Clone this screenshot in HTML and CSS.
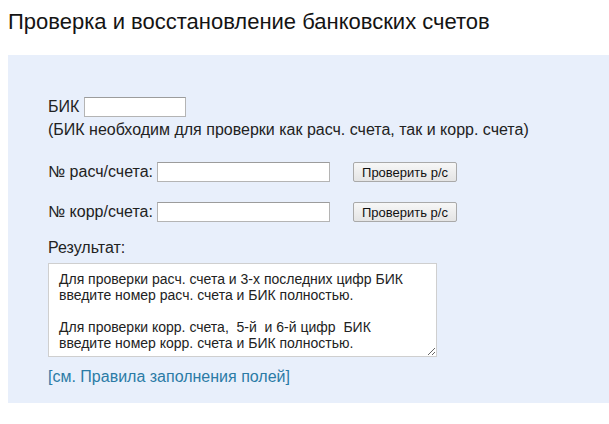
FILE: index.html
```html
<!DOCTYPE html>
<html lang="ru">
<head>
<meta charset="utf-8">
<title>Проверка и восстановление банковских счетов</title>
<link rel="stylesheet" href="styles.css">
</head>
<body>
<div class="page">
  <h1 class="title">Проверка и восстановление банковских счетов</h1>
  <div class="panel">
    <div class="row row-bik">
      <span class="label">БИК</span>
      <input class="field field-bik" type="text">
    </div>
    <div class="hint">(БИК необходим для проверки как расч. счета, так и корр. счета)</div>
    <div class="row row-acc">
      <span class="label">№ расч/счета:</span>
      <input class="field field-acc" type="text">
      <button class="btn" type="button">Проверить р/с</button>
    </div>
    <div class="row row-acc row-corr">
      <span class="label">№ корр/счета:</span>
      <input class="field field-acc" type="text">
      <button class="btn" type="button">Проверить р/с</button>
    </div>
    <div class="result-label">Результат:</div>
    <textarea class="result">Для проверки расч. счета и 3-х последних цифр БИК
введите номер расч. счета и БИК полностью.

Для проверки корр. счета,  5-й  и 6-й цифр  БИК
введите номер корр. счета и БИК полностью.</textarea>
    <a class="rules" href="#">[см. Правила заполнения полей]</a>
  </div>
</div>
</body>
</html>
```

FILE: styles.css
```css
html, body {
  margin: 0;
  padding: 0;
  background: #ffffff;
}

.page {
  padding-left: 8px;
  font-family: "Liberation Sans", Arial, sans-serif;
  color: #222222;
}

.title {
  margin: 0;
  padding-top: 10px;
  font-size: 22px;
  line-height: 24px;
  font-weight: normal;
  color: #141414;
  height: 45px;
}

.panel {
  background: #e8effb;
  padding: 42px 0 0 40px;
  height: 306px;
  display: flex;
  flex-direction: column;
  align-items: flex-start;
  font-size: 16px;
}

.row {
  display: flex;
  align-items: center;
  height: 20px;
}

.label {
  line-height: 20px;
}

.field {
  box-sizing: border-box;
  height: 20px;
  margin: 0 0 0 4px;
  padding: 1px 3px;
  border: 1px solid #b4b4b4;
  border-top-color: #9c9c9c;
  background: #ffffff;
  font-family: inherit;
  font-size: 13px;
}

.field-bik {
  width: 102px;
  margin-left: 5px;
}

.field-acc {
  width: 173px;
}

.hint {
  margin-top: 4px;
  line-height: 18px;
}

.row-acc {
  margin-top: 23px;
}

.row-corr {
  margin-top: 20px;
}

.btn {
  box-sizing: border-box;
  margin-left: 23px;
  height: 20px;
  width: 104px;
  padding: 0 3px;
  border: 1px solid #a9a9a9;
  border-radius: 2px;
  background: linear-gradient(#f7f7f7, #e4e4e4);
  font-family: inherit;
  font-size: 13px;
  color: #111111;
}

.result-label {
  margin-top: 17px;
  line-height: 18px;
}

.result {
  box-sizing: border-box;
  margin-top: 6px;
  width: 389px;
  height: 94px;
  padding: 7px 10px;
  border: 1px solid #cfcfcf;
  background: #ffffff;
  font-family: inherit;
  font-size: 14px;
  line-height: 16px;
  color: #222222;
  resize: both;
}

.rules {
  margin-top: 11px;
  line-height: 18px;
  color: #2b7ba6;
  text-decoration: none;
}
```
